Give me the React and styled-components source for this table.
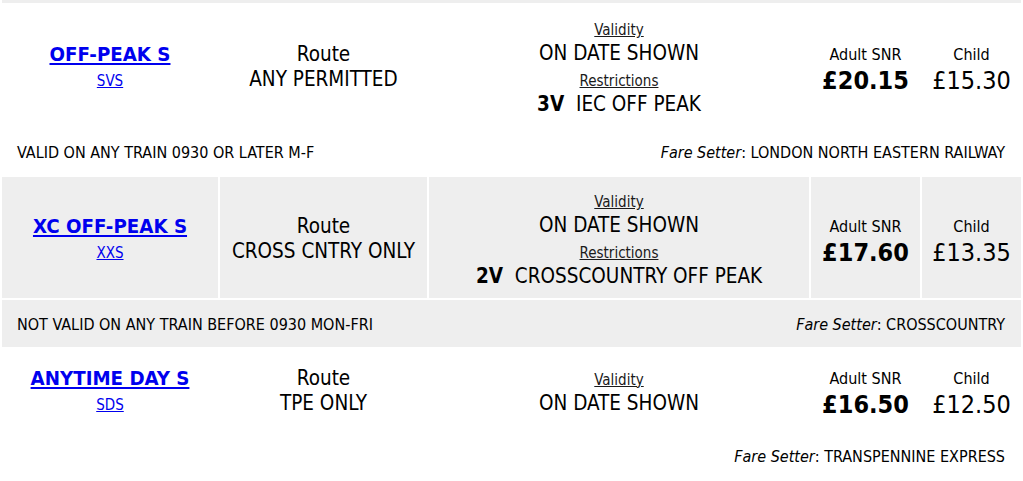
import React from "react";
import styled, { createGlobalStyle } from "styled-components";

const colors = {
  shade: "#eeeeee",
  text: "#000000",
  label: "#1a1a1a",
  link: "#0000ee",
};

const GlobalStyle = createGlobalStyle`
  body {
    margin: 0;
    background: #ffffff;
    color: ${colors.text};
    font-family: "DejaVu Sans Condensed", "DejaVu Sans", sans-serif;
  }
`;

const ClippedBand = styled.div`
  height: 3px;
  margin: 0 2px;
  background: ${colors.shade};
`;

const FareTable = styled.table`
  width: 100%;
  table-layout: fixed;
  border-collapse: separate;
  border-spacing: 2px;
`;

const MainRow = styled.tr`
  height: 81px;
`;

// padding per cell kind: the validity and price cells sit a little lower
const paddings = {
  name: "10px 8px",
  route: "11px 8px 9px",
  validity: "15px 8px 9px",
  price: "16px 8px 5px",
};

const Cell = styled.td`
  background: ${(p) => (p.$shaded ? colors.shade : "transparent")};
  padding: ${(p) => paddings[p.$kind] || paddings.name};
  text-align: center;
  vertical-align: middle;
`;

const NoteCell = styled.td`
  background: ${(p) => (p.$shaded ? colors.shade : "transparent")};
  padding: 16px 16px 13px 15px;
  font-size: 16px;
  line-height: 18px;
`;

const NoteLine = styled.div`
  display: flex;
  justify-content: space-between;
  gap: 24px;
  white-space: nowrap;
`;

const FareName = styled.a`
  display: block;
  color: ${colors.link};
  font-size: 20.3px;
  font-weight: bold;
  line-height: 26px;
  text-decoration: underline;
`;

const FareCode = styled.a`
  display: block;
  margin-top: 5px;
  color: ${colors.link};
  font-size: 15px;
  line-height: 18px;
  text-decoration: underline;
`;

const BigLine = styled.div`
  font-size: 20.5px;
  line-height: ${(p) => p.$lh || 25}px;
  white-space: nowrap;
`;

const Label = styled.div`
  margin-top: ${(p) => p.$gap || 0}px;
  color: ${colors.label};
  font-size: 15px;
  line-height: 20px;
  text-decoration: underline;
`;

const RestrictionCode = styled.b`
  margin-right: 6px;
`;

const PriceLabel = styled.div`
  font-size: 16px;
  line-height: 20px;
`;

const Amount = styled.div`
  font-size: 25px;
  line-height: 32px;
  font-weight: ${(p) => (p.$bold ? "bold" : "normal")};
`;

const Setter = styled.i`
  font-style: italic;
`;

const fares = [
  {
    name: "OFF-PEAK S",
    code: "SVS",
    route: "ANY PERMITTED",
    validity: "ON DATE SHOWN",
    restriction: { code: "3V", text: "IEC OFF PEAK" },
    adult: "£20.15",
    child: "£15.30",
    note: "VALID ON ANY TRAIN 0930 OR LATER M-F",
    setter: "LONDON NORTH EASTERN RAILWAY",
  },
  {
    name: "XC OFF-PEAK S",
    code: "XXS",
    route: "CROSS CNTRY ONLY",
    validity: "ON DATE SHOWN",
    restriction: { code: "2V", text: "CROSSCOUNTRY OFF PEAK" },
    adult: "£17.60",
    child: "£13.35",
    note: "NOT VALID ON ANY TRAIN BEFORE 0930 MON-FRI",
    setter: "CROSSCOUNTRY",
  },
  {
    name: "ANYTIME DAY S",
    code: "SDS",
    route: "TPE ONLY",
    validity: "ON DATE SHOWN",
    restriction: null,
    adult: "£16.50",
    child: "£12.50",
    note: "",
    setter: "TRANSPENNINE EXPRESS",
  },
];

const FareRows = ({ fare, shaded }) => (
  <>
    <MainRow>
      <Cell $shaded={shaded} $kind="name">
        <FareName href="#">{fare.name}</FareName>
        <FareCode href="#">{fare.code}</FareCode>
      </Cell>
      <Cell $shaded={shaded} $kind="route">
        <BigLine>Route</BigLine>
        <BigLine>{fare.route}</BigLine>
      </Cell>
      <Cell $shaded={shaded} $kind="validity">
        <Label>Validity</Label>
        <BigLine $lh={26}>{fare.validity}</BigLine>
        {fare.restriction && (
          <>
            <Label $gap={5}>Restrictions</Label>
            <BigLine $lh={26}>
              <RestrictionCode>{fare.restriction.code}</RestrictionCode>{" "}
              {fare.restriction.text}
            </BigLine>
          </>
        )}
      </Cell>
      <Cell $shaded={shaded} $kind="price">
        <PriceLabel>Adult SNR</PriceLabel>
        <Amount $bold>{fare.adult}</Amount>
      </Cell>
      <Cell $shaded={shaded} $kind="price">
        <PriceLabel>Child</PriceLabel>
        <Amount>{fare.child}</Amount>
      </Cell>
    </MainRow>
    <tr>
      <NoteCell colSpan={5} $shaded={shaded}>
        <NoteLine>
          <span>{fare.note}</span>
          <span>
            <Setter>Fare Setter</Setter>: {fare.setter}
          </span>
        </NoteLine>
      </NoteCell>
    </tr>
  </>
);

const App = () => {
  return (
    <>
      <GlobalStyle />
      <ClippedBand />
      <FareTable>
        <colgroup>
          <col style={{ width: 216 }} />
          <col style={{ width: 207 }} />
          <col style={{ width: 380 }} />
          <col style={{ width: 109 }} />
          <col style={{ width: 99 }} />
        </colgroup>
        <tbody>
          {fares.map((fare, i) => (
            <FareRows key={fare.code} fare={fare} shaded={i % 2 === 1} />
          ))}
        </tbody>
      </FareTable>
    </>
  );
};

export default App;
